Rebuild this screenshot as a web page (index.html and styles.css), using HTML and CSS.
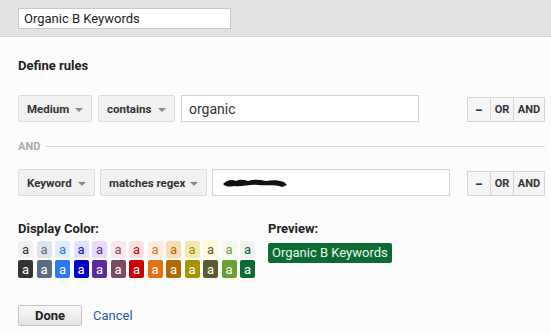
FILE: index.html
```html
<!DOCTYPE html>
<html>
<head>
<meta charset="utf-8">
<title>Define rules</title>
<link rel="stylesheet" href="styles.css">
</head>
<body>
<div class="header">
	<input class="name-input" type="text" value="Organic B Keywords">
</div>

<div class="content">
	<h2>Define rules</h2>

	<div class="rule">
		<div class="select w-medium">Medium <span class="caret"></span></div>
		<div class="select w-contains">contains <span class="caret"></span></div>
		<div class="value">organic</div>
		<div class="ops">
			<span class="op op-minus">&minus;</span><span class="op">OR</span><span class="op op-and">AND</span>
		</div>
	</div>

	<div class="divider">
		<span>AND</span>
	</div>

	<div class="rule">
		<div class="select w-keyword">Keyword <span class="caret"></span></div>
		<div class="select w-regex">matches regex <span class="caret"></span></div>
		<div class="value">
			<svg class="redact" width="66" height="10" viewBox="0 0 66 10">
				<path d="M1 6 C5 2 10 1 14 3 C18 1 22 2 26 3 C32 1 38 2 44 3 C50 2 56 2 62 4 L65 7 L60 9 C52 6 44 8 36 7 C28 6 20 9 12 8 C8 9 4 9 1 6 Z" fill="#111"/>
			</svg>
		</div>
		<div class="ops">
			<span class="op op-minus">&minus;</span><span class="op">OR</span><span class="op op-and">AND</span>
		</div>
	</div>

	<div class="colors">
		<div class="color-col">
			<div class="label">Display Color:</div>
			<div class="swatches">
				<span class="sw" style="background:#f0f0f0;color:#333">a</span>
				<span class="sw" style="background:#dfe4ec;color:#5b6b80">a</span>
				<span class="sw" style="background:#e3ecff;color:#2b6ff2">a</span>
				<span class="sw" style="background:#e1e1fb;color:#1414b8">a</span>
				<span class="sw" style="background:#e7dcfa;color:#5a2ca0">a</span>
				<span class="sw" style="background:#fbe7ef;color:#7c4a62">a</span>
				<span class="sw" style="background:#fde1e1;color:#c40000">a</span>
				<span class="sw" style="background:#fdeee0;color:#e07020">a</span>
				<span class="sw" style="background:#f8dcb6;color:#b06a00">a</span>
				<span class="sw" style="background:#f3e8b2;color:#a08e00">a</span>
				<span class="sw" style="background:#fcfad9;color:#5a5a30">a</span>
				<span class="sw" style="background:#f4f9ee;color:#6aa030">a</span>
				<span class="sw" style="background:#eef3ee;color:#0b6033">a</span>

				<span class="sw dark" style="background:#333333">a</span>
				<span class="sw dark" style="background:#5b6b82">a</span>
				<span class="sw dark" style="background:#2a7af5">a</span>
				<span class="sw dark" style="background:#0000c6">a</span>
				<span class="sw dark" style="background:#5a2ca0">a</span>
				<span class="sw dark" style="background:#7c4a62">a</span>
				<span class="sw dark" style="background:#cc0000">a</span>
				<span class="sw dark" style="background:#e87010">a</span>
				<span class="sw dark" style="background:#b06a00">a</span>
				<span class="sw dark" style="background:#a89400">a</span>
				<span class="sw dark" style="background:#5c5a30">a</span>
				<span class="sw dark" style="background:#6aa030">a</span>
				<span class="sw dark" style="background:#0b6b35">a</span>
			</div>
		</div>
		<div class="preview-col">
			<div class="label">Preview:</div>
			<span class="badge">Organic B Keywords</span>
		</div>
	</div>

	<div class="actions">
		<button class="done">Done</button>
		<a class="cancel" href="#">Cancel</a>
	</div>
</div>
</body>
</html>
```

FILE: styles.css
```css
body {
	margin: 0;
	background-color: #fcfcfc;
	font-family: Roboto, "Liberation Sans", Arial, sans-serif;
	font-size: 13px;
	color: #222;
}

.header {
	background-color: #e3e3e3;
	border-bottom: 1px solid #d4d4d4;
	height: 37px;
	padding: 8px 18px 0 18px;
	box-sizing: border-box;
}

.name-input {
	width: 213px;
	height: 21px;
	box-sizing: border-box;
	border: 1px solid #c8c8c8;
	background: #fff;
	font-family: inherit;
	font-size: 13px;
	color: #222;
	padding: 0 5px;
	margin: 0;
	outline: none;
}

.content {
	padding: 0 6px 0 18px;
}

h2 {
	font-size: 13px;
	font-weight: bold;
	color: #222;
	margin: 21px 0 0 0;
	line-height: 16px;
}

.rule {
	display: flex;
	align-items: center;
	height: 27px;
	margin-top: 21px;
}

.select {
	display: flex;
	align-items: center;
	justify-content: space-between;
	white-space: nowrap;
	height: 27px;
	box-sizing: border-box;
	padding: 0 8px 0 8px;
	background: #f1f1f1;
	border: 1px solid #dcdcdc;
	border-radius: 2px;
	font-size: 11.5px;
	font-weight: bold;
	color: #333;
	margin-right: 6px;
}

.w-medium { width: 74px; }
.w-contains { width: 77px; }
.w-keyword { width: 77px; margin-right: 5px; }
.w-regex { width: 107px; margin-right: 5px; }

.caret {
	flex-shrink: 0;
	width: 0;
	height: 0;
	border-left: 4px solid transparent;
	border-right: 4px solid transparent;
	border-top: 4px solid #8a8a8a;
	margin-top: 2px;
}

.value {
	display: flex;
	align-items: center;
	width: 238px;
	height: 27px;
	box-sizing: border-box;
	background: #fff;
	border: 1px solid #d2d2d2;
	padding: 0 7px;
	font-size: 14px;
	color: #333;
}

.redact {
	margin-left: 2px;
}

.ops {
	display: flex;
	margin-left: auto;
	margin-top: 2px;
	height: 25px;
	border: 1px solid #d6d6d6;
	box-sizing: border-box;
	background: #f5f5f5;
}

.op {
	display: flex;
	align-items: center;
	justify-content: center;
	width: 22px;
	font-size: 11px;
	font-weight: bold;
	color: #333;
	border-left: 1px solid #d6d6d6;
}

.op-minus {
	border-left: none;
	font-size: 14px;
}

.op-and {
	width: 30px;
}

.divider {
	display: flex;
	align-items: center;
	margin-top: 16px;
	height: 16px;
}

.divider span {
	font-size: 11px;
	font-weight: bold;
	color: #aaa;
	margin-right: 5px;
}

.divider::after {
	content: "";
	flex: 1;
	height: 1px;
	background: #dcdcdc;
}

.rule + .divider + .rule {
	margin-top: 15px;
}

.colors {
	display: flex;
	margin-top: 25px;
}

.color-col {
	width: 250px;
}

.label {
	font-size: 13px;
	font-weight: bold;
	color: #222;
	line-height: 16px;
}

.swatches {
	display: grid;
	grid-template-columns: repeat(13, 15px);
	grid-template-rows: 17px 18px;
	column-gap: 3.5px;
	row-gap: 2px;
	margin-top: 4px;
}

.sw {
	display: flex;
	align-items: center;
	justify-content: center;
	border-radius: 2px;
	font-size: 13px;
	line-height: 1;
}

.sw.dark {
	color: #fff;
}

.badge {
	display: inline-block;
	margin-top: 6px;
	background: #0b6b32;
	color: #e9f6ea;
	font-size: 13px;
	line-height: 20px;
	padding: 0 4px;
	border-radius: 2px;
}

.actions {
	display: flex;
	align-items: center;
	margin-top: 27px;
}

.done {
	width: 64px;
	height: 21px;
	border: 1px solid #c4c4c4;
	border-radius: 2px;
	background: linear-gradient(#f8f8f8, #e4e4e4);
	font-family: inherit;
	font-size: 13px;
	font-weight: bold;
	color: #222;
	padding: 0;
}

.cancel {
	margin-left: 11px;
	color: #1f5c99;
	text-decoration: none;
	font-size: 13px;
}
```
